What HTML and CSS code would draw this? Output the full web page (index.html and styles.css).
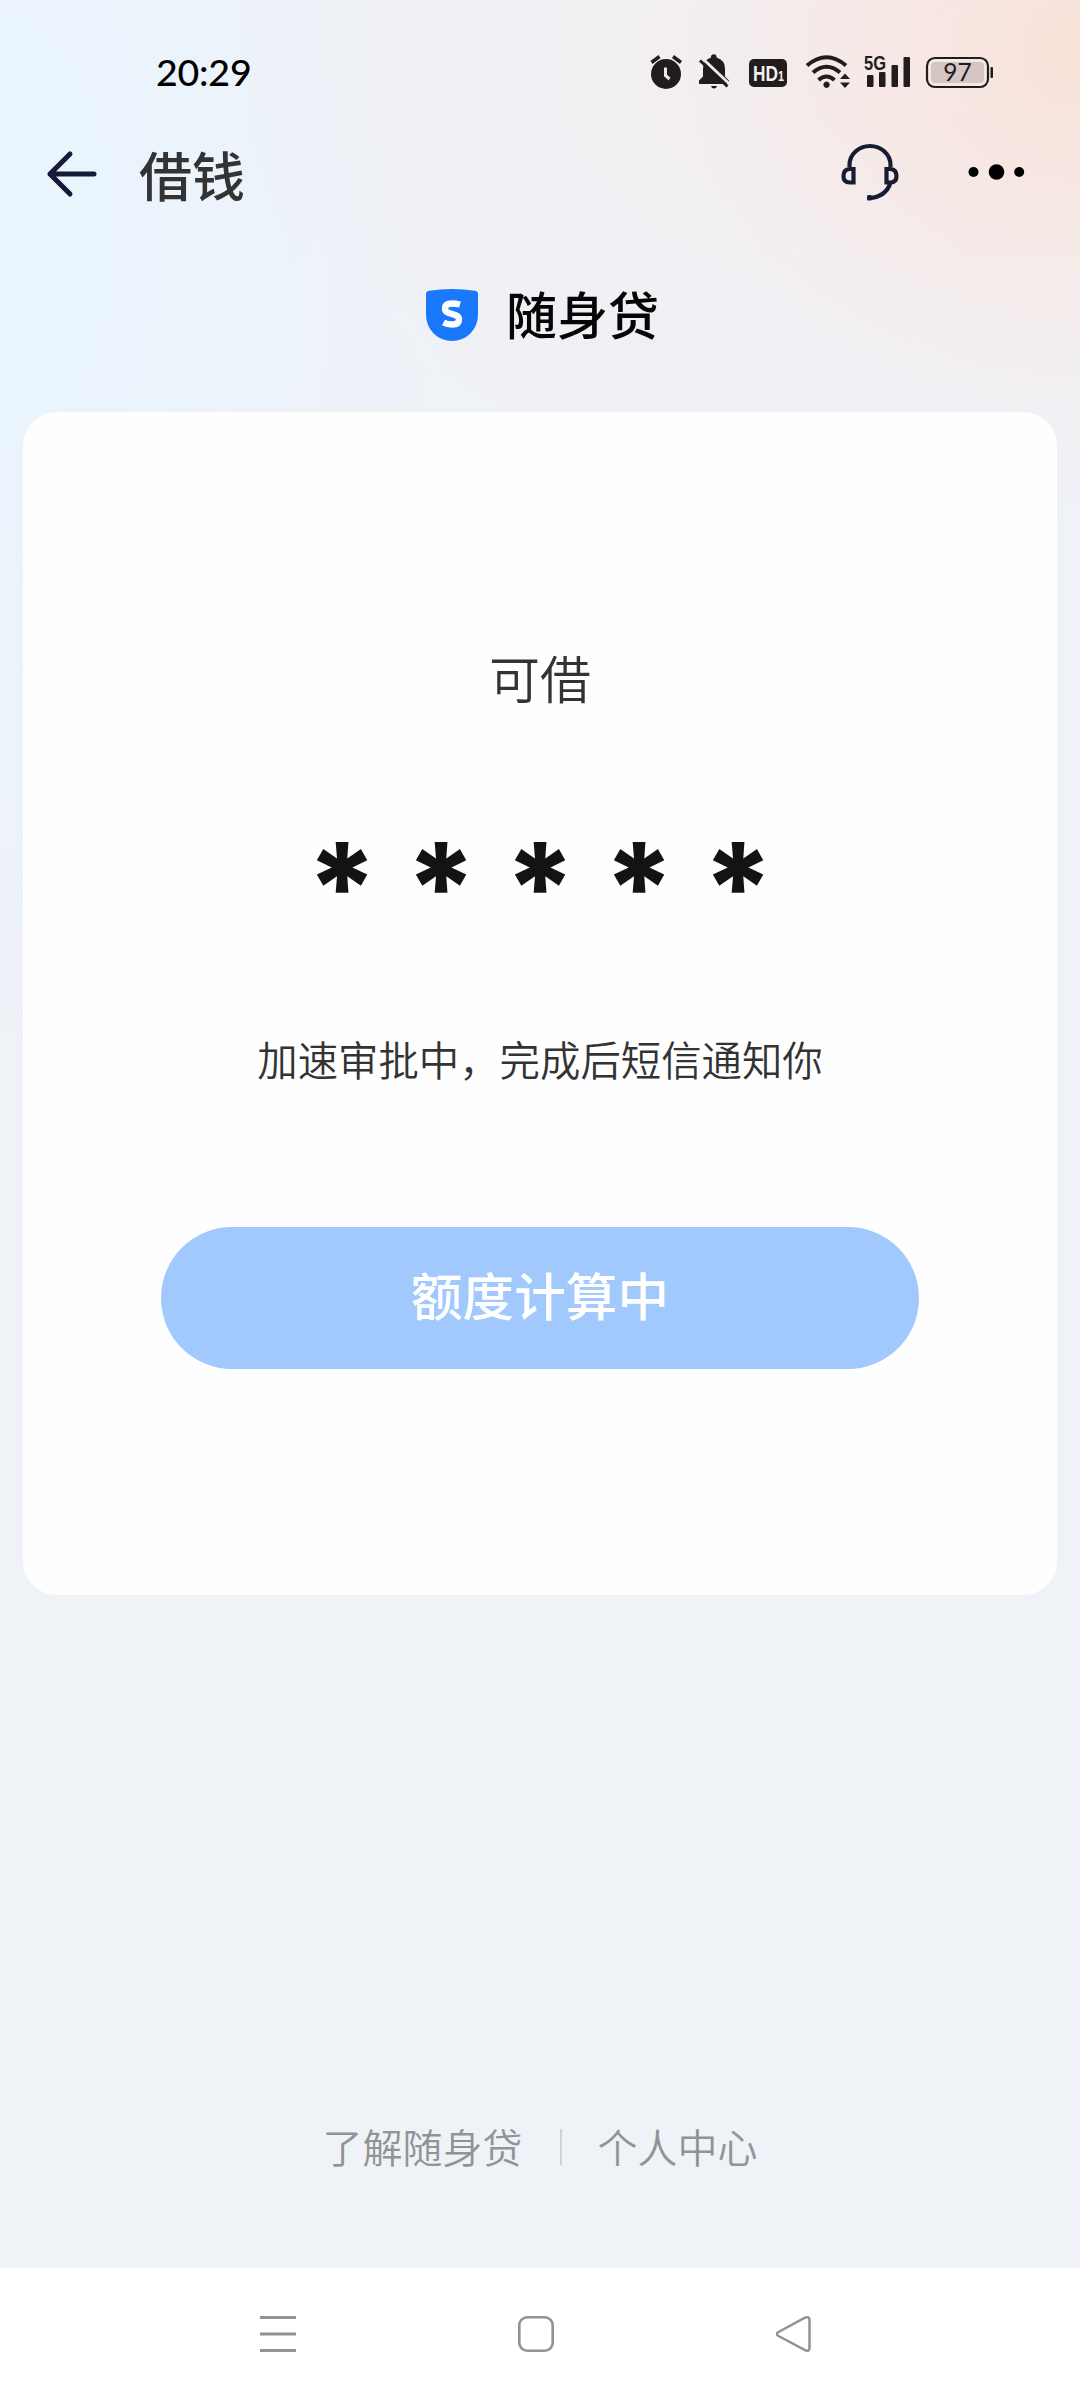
FILE: index.html
```html
<!DOCTYPE html>
<html lang="zh-CN">
<head>
<meta charset="utf-8">
<title>借钱</title>
<link rel="stylesheet" href="styles.css">
</head>
<body>
<div class="phone">
  <div class="status">
    <span class="time">20:29</span>
    <svg class="status-icons" width="346" height="40" viewBox="650 52 346 40">
      <g fill="#211d1f">
        <circle cx="666" cy="74" r="15"/>
        <path d="M651.500 62.500l8-6M681 62.500l-8-6" stroke="#211d1f" stroke-width="3.500"/>
        <path d="M665.500 67.500v8l4 3.500" fill="none" stroke="#f1e9ea" stroke-width="3"/>
        <path d="M699 84v-3.500l4-4V69q0-9 8-11.500v-.5a2.800 2.800 0 0 1 5.600 0v.5q8.400 2.500 8.400 11.500v7.500l4 4V84zM711 86h6q-.5 2.500-3 2.500t-3-2.500z"/>
        <path d="M702 58l28 26.500" stroke="#f2e9e8" stroke-width="3"/>
        <path d="M700 60.500l27.500 26" stroke="#211d1f" stroke-width="3"/>
        <rect x="749" y="59" width="38" height="28" rx="5"/>
      </g>
      <text class="hd" x="753" y="81" textLength="31" lengthAdjust="spacingAndGlyphs">HD<tspan class="hd-sub">1</tspan></text>
      <g fill="none" stroke="#211d1f" stroke-width="4">
        <path d="M807 65.500q19.500-16.500 39 0M813 72.500q13.500-11.500 27 0M818.500 80q8-7 16 0"/>
      </g>
      <path fill="#211d1f" d="M826.500 81.500a3.200 3.200 0 1 0 .1 0zM840 79h10l-5-5.500zM840 82.500h10l-5 5.500z"/>
      <text class="net" x="864" y="70" textLength="22" lengthAdjust="spacingAndGlyphs">5G</text>
      <g fill="#211d1f">
        <rect x="867" y="75" width="6.500" height="12" rx="1"/>
        <rect x="879" y="72" width="6.500" height="15" rx="1"/>
        <rect x="891.500" y="65" width="6.500" height="22" rx="1"/>
        <rect x="903.500" y="57" width="6.500" height="30" rx="1"/>
        <rect x="990.500" y="67" width="2.500" height="11" rx="1"/>
      </g>
      <rect x="927" y="58" width="61" height="29" rx="8" fill="#f4e8e5" stroke="#211d1f" stroke-width="2.200"/>
      <rect x="931" y="62" width="53" height="21" rx="4" fill="#d5c6c4"/>
      <text class="battery" x="957.500" y="81" text-anchor="middle">97</text>
    </svg>
  </div>
  <header class="header">
    <svg width="54" height="50" viewBox="45 149 54 50" fill="none" stroke="#151a38" stroke-width="5" stroke-linecap="round" stroke-linejoin="round"><path d="M94 174H50M70 154L50 174l20 20"/></svg>
    <h1 class="title">借钱</h1>
    <svg class="headset" width="60" height="60" viewBox="840 142 60 60" fill="none" stroke="#161c32" stroke-width="4.200">
      <path d="M849.500 167v-2a20.500 19 0 0 1 41 0v2M853.500 169v13.500h-4q-6 0-6-6.500t6-7zM886.500 169v13.500h4q6 0 6-6.500t-6-7zM890.500 183q-5 14-21 15"/>
      <rect x="867" y="195" width="5" height="5.500" rx="1.500" fill="#161c32" stroke="none"/>
    </svg>
    <svg class="more" width="60" height="20" viewBox="966 162 60 20"><circle cx="973.500" cy="172" r="5"/><circle cx="996.500" cy="172" r="7.800"/><circle cx="1019.200" cy="172" r="5"/></svg>
  </header>
  <div class="brand">
    <svg width="52" height="52" viewBox="0 0 52 52"><path fill="#1a78fd" d="M0 5Q0 2.300 3 1.800Q26-1.800 49 1.800Q52 2.300 52 5V26A26 26 0 0 1 0 26z"/><path d="M34 15.500Q30 14.500 26 14.500C21 14.500 19 16.500 19 19.500C19 26.500 33 23.500 33 30.500C33 33.800 30.500 35.500 26 35.500Q21 35.500 17.500 33.500" fill="none" stroke="#fff" stroke-width="6.400"/></svg>
    <span class="brand-name">随身贷</span>
  </div>
  <main class="card">
    <div class="label">可借</div>
    <div class="amount"><span>*</span><span>*</span><span>*</span><span>*</span><span>*</span></div>
    <p class="hint">加速审批中，完成后短信通知你</p>
    <button class="submit">额度计算中</button>
  </main>
  <footer class="links"><a>了解随身贷</a><i class="divider"></i><a>个人中心</a></footer>
  <nav class="nav">
    <svg width="36" height="36" viewBox="0 0 36 36" stroke="#929292" stroke-width="3"><path d="M0 1.500h36M0 18h36M0 34.500h36"/></svg>
    <svg width="36" height="36" viewBox="0 0 36 36" fill="none" stroke="#929292" stroke-width="2.600"><rect x="1.300" y="1.300" width="33.400" height="33.400" rx="8"/></svg>
    <svg width="36" height="36" viewBox="0 0 36 36" fill="none" stroke="#929292" stroke-width="2.500"><path d="M2.500 16L29 1.700Q33.500 0 33.500 4V32Q33.500 36 29 34.200L2.500 20Q-.8 18 2.500 16z"/></svg>
  </nav>
</div>
</body>
</html>
```
FILE: styles.css
```css
* { box-sizing: border-box; }
body { margin: 0; font-family: "Noto Sans CJK SC", sans-serif; }
.phone {
  width: 1080px;
  height: 2400px;
  display: flex;
  flex-direction: column;
  overflow: hidden;
  background:
    radial-gradient(ellipse 400px 380px at 1080px 50px, #f9e2d9 0%, rgba(250, 228, 219, .5) 45%, rgba(250, 230, 222, 0) 100%),
    radial-gradient(ellipse 760px 480px at 960px 60px, rgba(247, 232, 231, .6), rgba(246, 232, 234, 0) 100%),
    radial-gradient(ellipse 460px 850px at 0 230px, #e9f5fe 0%, rgba(234, 244, 253, .6) 50%, rgba(238, 242, 248, 0) 100%),
    #eff2f7;
}
.status { height: 96px; flex: none; display: flex; align-items: flex-start; padding-left: 156px; }
.time { width: 494px; padding-top: 49px; font: 500 37.500px/46px Lato, sans-serif; letter-spacing: -.2px; color: #000; }
.status-icons { margin-top: 52px; }
.hd { font: bold 22px "Liberation Sans", sans-serif; fill: #f3edef; }
.hd-sub { font-size: 14px; }
.net { font: bold 21px "Liberation Sans", sans-serif; fill: #211d1f; }
.battery { font: 24.500px Lato, sans-serif; fill: #211d1f; }
.header { height: 156px; flex: none; display: flex; align-items: center; padding: 0 54px 0 45px; }
.title { margin: -1px 0 0 40px; font-size: 53px; line-height: 76px; font-weight: 500; color: #333; }
.headset { margin-left: auto; margin-right: 66px; margin-top: -4px; }
.more { margin-top: -4px; }
.brand { height: 160px; flex: none; display: flex; justify-content: center; gap: 28px; padding: 37px 0 0 5px; font-size: 51px; line-height: 52px; font-weight: 500; color: #060606; }
.brand-name { margin-top: -2px; }
.card { height: 1183px; flex: none; margin: 0 23px; border-radius: 34px; background: #fefefe; display: flex; flex-direction: column; align-items: center; }
.label { margin-top: 227px; font-size: 51px; line-height: 76px; font-weight: 350; color: #333; }
.amount { display: flex; width: 495px; height: 52px; margin-top: 125px; font: 800 124px/94px Inter, sans-serif; color: #131313; }
.amount span { width: 99px; text-align: center; }
.hint { margin: 137px 0 0; font-size: 40.400px; line-height: 60px; font-weight: 350; color: #333; }
.submit { width: 758px; height: 142px; margin-top: 138px; padding: 0 0 9px; border: 0; border-radius: 71px; background: #a2c9fe; color: #fff; font: 500 51.600px/133px "Noto Sans CJK SC", sans-serif; }
.links { flex: 1; display: flex; align-items: flex-end; justify-content: center; padding-bottom: 92px; font-size: 40px; line-height: 60px; font-weight: 350; color: #929397; }
.divider { width: 2px; height: 36px; margin: 0 36px 11px 37px; background: #d0d2d8; }
.nav { height: 132px; flex: none; background: #fff; display: flex; align-items: flex-start; justify-content: center; gap: 222px; padding: 48px 8px 0 0; }
```
